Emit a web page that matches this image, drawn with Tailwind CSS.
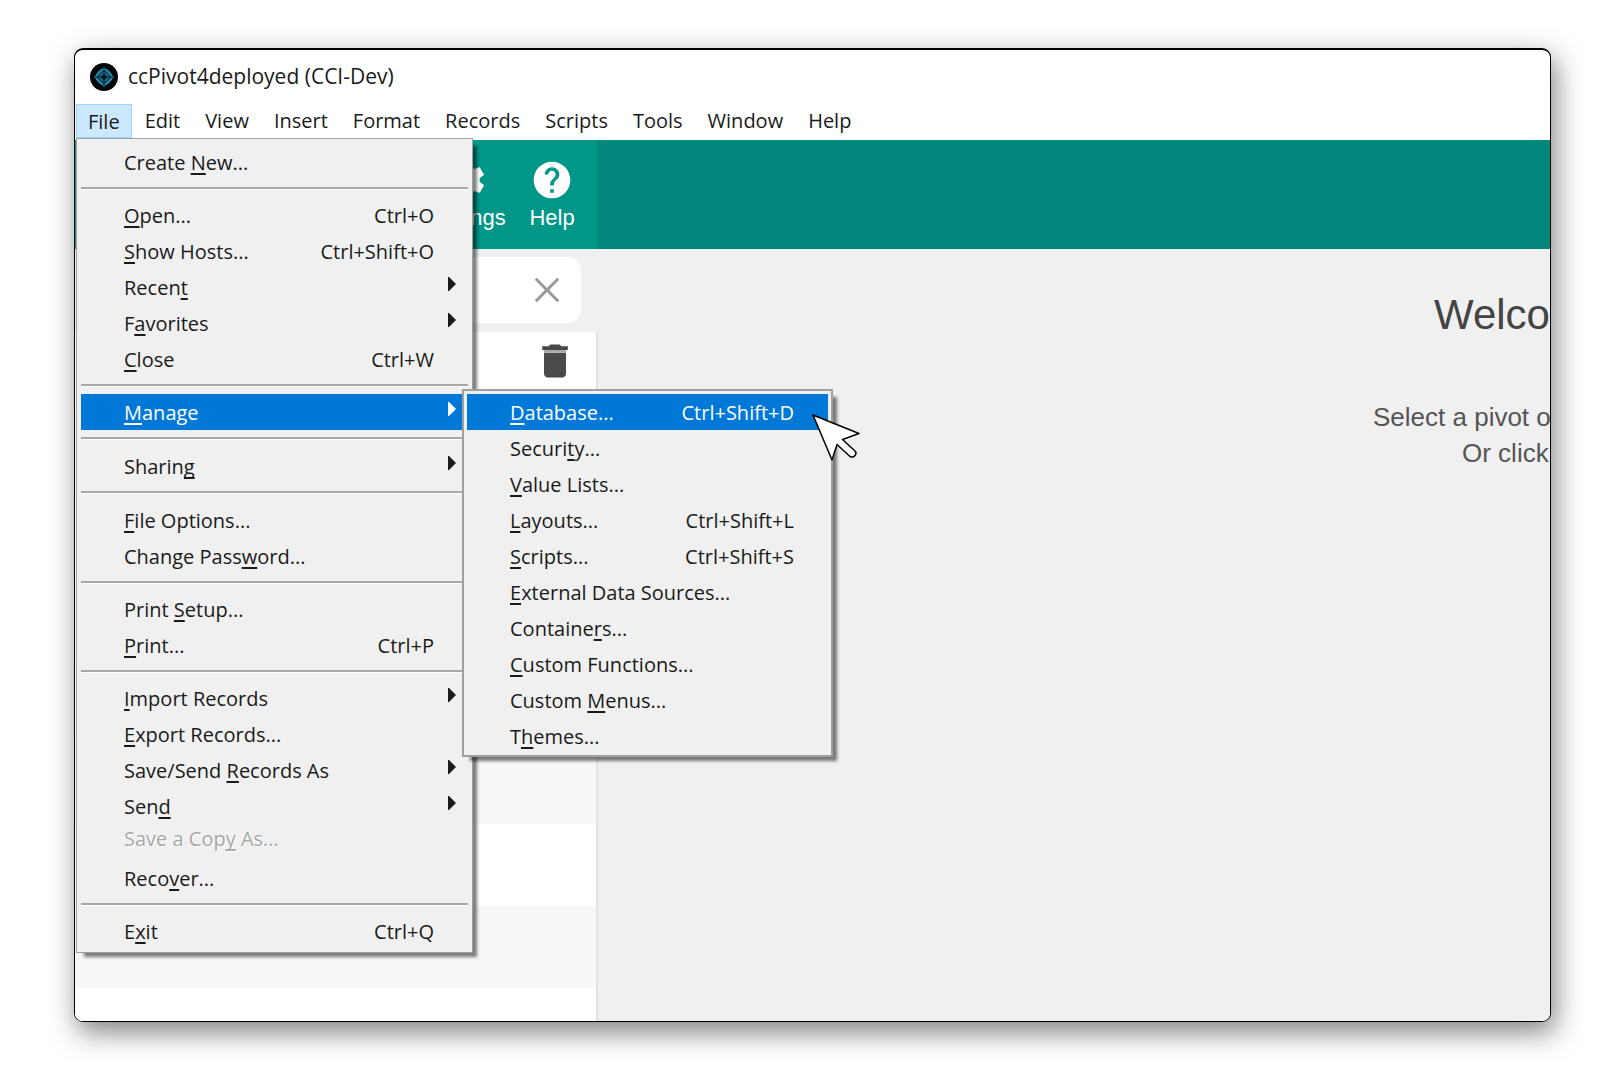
<!DOCTYPE html>
<html lang="en">
<head>
<meta charset="utf-8">
<title>ccPivot4deployed (CCI-Dev)</title>
<script src="https://cdn.jsdelivr.net/npm/@tailwindcss/browser@4"></script>
</head>
<body class="bg-white">
<svg class="hidden" aria-hidden="true">
  <symbol id="arrow" viewBox="0 0 8 14"><path d="M0 0h1l7 7-7 7H0z" fill="currentColor"/></symbol>
</svg>
<div class="flex min-h-screen flex-col overflow-hidden py-12 pl-[74px] pr-[73px]">
  <div class="relative flex flex-1 flex-col overflow-visible rounded-[9px] border border-t-2 border-black bg-white font-['Open_Sans',sans-serif] text-[20px] text-[#1a1a1a] shadow-[4px_10px_28px_rgba(0,0,0,0.5)]">
    <header class="flex h-[54px] items-center gap-[10px] pl-[15px]">
      <svg class="size-7" viewBox="0 0 28 28" fill="none">
        <circle cx="14" cy="14" r="14" fill="#03070a"/>
        <circle cx="14" cy="14" r="7.500" fill="#0e3646" stroke="#1f7893" stroke-width="1.500"/>
        <path d="M14 5l9 9-9 9-9-9z" stroke="#2b8fae" stroke-width="1.500"/>
        <path d="M14 9l5 5-5 5-5-5z" stroke="#1f7893" stroke-width="1.500"/>
        <path d="M14 5v18M5 14h18" stroke="#06161e" stroke-width="1"/>
        <circle cx="14" cy="14" r="2" fill="#061218"/>
      </svg>
      <h1 class="whitespace-nowrap text-[21px]">ccPivot4deployed (CCI-Dev)</h1>
    </header>

    <nav class="relative z-10 flex h-[34px] gap-px pl-px leading-[34px] [&>button]:px-3" aria-label="Menu bar">
      <div class="relative">
        <button class="h-[34px] border border-[#99d1ff] bg-[#cce8ff] px-[11px]" aria-expanded="true">File</button>
        <ul class="absolute left-0 top-full w-[397px] border border-[#a0a0a0] bg-[#f0f0f0] px-1 pb-[3px] pt-[5px] leading-9 shadow-[6px_6px_3px_-2px_rgba(0,0,0,0.5)] [&_button]:flex [&_button]:h-9 [&_button]:w-full [&_button]:items-center [&_button]:justify-between [&_button]:whitespace-nowrap [&_button]:pl-[43px] [&_button]:pr-[34px] [&_button]:pt-[2px] [&_hr]:my-[7px] [&_hr]:h-[3px] [&_hr]:border-b [&_hr]:border-t-2 [&_hr]:border-b-white [&_hr]:border-t-[#a8a8a8] [&_svg]:absolute [&_svg]:right-3 [&_svg]:top-2 [&_svg]:h-[14px] [&_svg]:w-2 [&_u]:decoration-2 [&_u]:underline-offset-[3px] [&_u]:[text-decoration-skip-ink:none] [&>li]:relative">
          <li><button><span>Create <u>N</u>ew...</span></button></li>
          <li><hr></li>
          <li><button><span><u>O</u>pen...</span><span>Ctrl+O</span></button></li>
          <li><button><span><u>S</u>how Hosts...</span><span>Ctrl+Shift+O</span></button></li>
          <li><button><span>Recen<u>t</u></span></button><svg><use href="#arrow"/></svg></li>
          <li><button><span>F<u>a</u>vorites</span></button><svg><use href="#arrow"/></svg></li>
          <li><button><span><u>C</u>lose</span><span>Ctrl+W</span></button></li>
          <li><hr></li>
          <li class="z-10">
            <button class="bg-[#0078d7] text-white" aria-expanded="true"><span><u>M</u>anage</span></button><svg class="text-white"><use href="#arrow"/></svg>
            <ul class="absolute -top-[5px] left-[381px] w-[371px] border-2 border-[#a0a0a0] bg-[#f0f0f0] p-[3px] pb-px shadow-[6px_6px_3px_-2px_rgba(0,0,0,0.5)]">
              <li><button class="bg-[#0078d7] text-white"><span><u>D</u>atabase...</span><span>Ctrl+Shift+D</span></button></li>
              <li><button><span>Securi<u>t</u>y...</span></button></li>
              <li><button><span><u>V</u>alue Lists...</span></button></li>
              <li><button><span><u>L</u>ayouts...</span><span>Ctrl+Shift+L</span></button></li>
              <li><button><span><u>S</u>cripts...</span><span>Ctrl+Shift+S</span></button></li>
              <li><button><span><u>E</u>xternal Data Sources...</span></button></li>
              <li><button><span>Containe<u>r</u>s...</span></button></li>
              <li><button><span><u>C</u>ustom Functions...</span></button></li>
              <li><button><span>Custom <u>M</u>enus...</span></button></li>
              <li><button><span>T<u>h</u>emes...</span></button></li>
            </ul>
          </li>
          <li class="pb-px"><hr></li>
          <li><button><span>Sharin<u>g</u></span></button><svg><use href="#arrow"/></svg></li>
          <li class="pb-px"><hr></li>
          <li><button><span><u>F</u>ile Options...</span></button></li>
          <li><button><span>Change Pass<u>w</u>ord...</span></button></li>
          <li><hr></li>
          <li><button><span>Print <u>S</u>etup...</span></button></li>
          <li><button><span><u>P</u>rint...</span><span>Ctrl+P</span></button></li>
          <li><hr></li>
          <li><button><span><u>I</u>mport Records</span></button><svg><use href="#arrow"/></svg></li>
          <li><button><span><u>E</u>xport Records...</span></button></li>
          <li><button><span>Save/Send <u>R</u>ecords As</span></button><svg><use href="#arrow"/></svg></li>
          <li><button><span>Sen<u>d</u></span></button><svg><use href="#arrow"/></svg></li>
          <li><button class="pb-2 text-[#a8a8a8] [text-shadow:1px_1px_0_#fff]" disabled><span>Save a Cop<u>y</u> As...</span></button></li>
          <li><button><span>Reco<u>v</u>er...</span></button></li>
          <li><hr></li>
          <li><button><span>E<u>x</u>it</span><span>Ctrl+Q</span></button></li>
        </ul>
        <svg class="absolute left-[735px] top-[309px] z-20 h-[50px] w-[50px]" viewBox="-1 -1 50 50" fill="#fff" stroke="#000" stroke-width="1.500" stroke-linejoin="round">
          <path d="M1 1l46 18.500-16.500 6 12.500 11.500q2 2 0 4.500t-5 1L25 30.500 20 46z"/>
        </svg>
      </div>
      <button>Edit</button>
      <button>View</button>
      <button>Insert</button>
      <button>Format</button>
      <button>Records</button>
      <button>Scripts</button>
      <button>Tools</button>
      <button>Window</button>
      <button>Help</button>
    </nav>

    <div class="mt-[2px] flex h-[109px] bg-[#00867a] font-['Liberation_Sans',Arial,sans-serif] text-[22px] leading-6 text-white">
      <div class="flex w-[522px] justify-end bg-[#009688] pr-[2px]">
        <button class="flex w-[86px] flex-col items-center gap-1 pt-[18px]">
          <svg class="size-11" viewBox="0 0 24 24" fill="currentColor"><path d="M19.430 12.980c.04-.32.07-.64.07-.98s-.03-.66-.07-.98l2.110-1.650c.19-.15.24-.42.12-.64l-2-3.460c-.12-.22-.39-.3-.61-.22l-2.490 1c-.52-.4-1.080-.73-1.690-.98l-.38-2.650C14.460 2.180 14.250 2 14 2h-4c-.25 0-.46.18-.49.42l-.38 2.650c-.61.25-1.170.59-1.690.98l-2.490-1c-.23-.09-.49 0-.61.22l-2 3.460c-.13.22-.07.49.12.64l2.110 1.650c-.04.32-.07.65-.07.98s.03.66.07.98l-2.110 1.650c-.19.15-.24.42-.12.64l2 3.460c.12.22.39.3.61.22l2.490-1c.52.4 1.080.73 1.690.98l.38 2.650c.03.24.24.42.49.42h4c.25 0 .46-.18.49-.42l.38-2.650c.61-.25 1.170-.59 1.690-.98l2.490 1c.23.09.49 0 .61-.22l2-3.460c.12-.22.07-.49-.12-.64l-2.110-1.650zM12 15.500a3.500 3.500 0 1 1 0-7 3.500 3.500 0 0 1 0 7z"/></svg>
          Settings
        </button>
        <button class="flex w-[86px] flex-col items-center gap-1 pt-[18px]">
          <svg class="size-11" viewBox="0 0 24 24" fill="currentColor"><path d="M12 2C6.480 2 2 6.480 2 12s4.480 10 10 10 10-4.480 10-10S17.520 2 12 2zm1 17h-2v-2h2v2zm2.070-7.750l-.9.920C13.450 12.900 13 13.500 13 15h-2v-.5c0-1.100.45-2.100 1.170-2.830l1.240-1.260c.37-.36.59-.86.59-1.410 0-1.100-.9-2-2-2s-2 .9-2 2H8c0-2.210 1.790-4 4-4s4 1.790 4 4c0 .88-.36 1.680-.93 2.250z"/></svg>
          Help
        </button>
      </div>
    </div>

    <div class="flex flex-1 overflow-hidden rounded-b-lg bg-[#f0f0f0] font-['Liberation_Sans',Arial,sans-serif]">
      <aside class="flex w-[523px] flex-col">
        <div class="mb-[9px] ml-4 mr-[17px] mt-2 flex h-[66px] items-center rounded-[14px] bg-white pr-[13px]">
          <input class="min-w-0 flex-1 outline-none" type="text" aria-label="Search">
          <button aria-label="Clear search"><svg class="size-[42px]" viewBox="0 0 24 24" fill="#999"><path d="M19 6.200L17.800 5 12 10.800 6.200 5 5 6.200l5.800 5.800L5 17.800 6.200 19l5.800-5.800 5.800 5.800 1.200-1.200-5.800-5.800z"/></svg></button>
        </div>
        <ul class="flex-1 border-r-2 border-[#e2e2e2] bg-white [&>li]:h-[82px] [&>li:nth-child(even)]:bg-[#f7f7f7]">
          <li class="flex items-start justify-end pr-[19px] pt-[7px]"><button aria-label="Delete"><svg class="size-11" viewBox="0 0 24 24" fill="#4a4a4a"><path d="M6 19c0 1.100.9 2 2 2h8c1.100 0 2-.9 2-2V7.500H6V19z"/><path d="M19 4h-3.500l-1-1h-5l-1 1H5v2h14z"/><path d="M6 6h12v1.500H6z" fill="#aaa"/></svg></button></li>
          <li></li><li></li><li></li><li></li><li></li><li></li><li></li>
        </ul>
      </aside>
      <main class="flex min-w-0 flex-1 flex-col items-end overflow-hidden whitespace-nowrap text-[26px] leading-9 text-[#555]">
        <h2 class="mt-10 w-[116px] text-[42px] leading-[52px] text-[#444]">Welco</h2>
        <p class="mt-[58px] w-[177px]">Select a pivot or</p>
        <p class="w-[88px]">Or click</p>
      </main>
    </div>
  </div>
</div>
</body>
</html>
